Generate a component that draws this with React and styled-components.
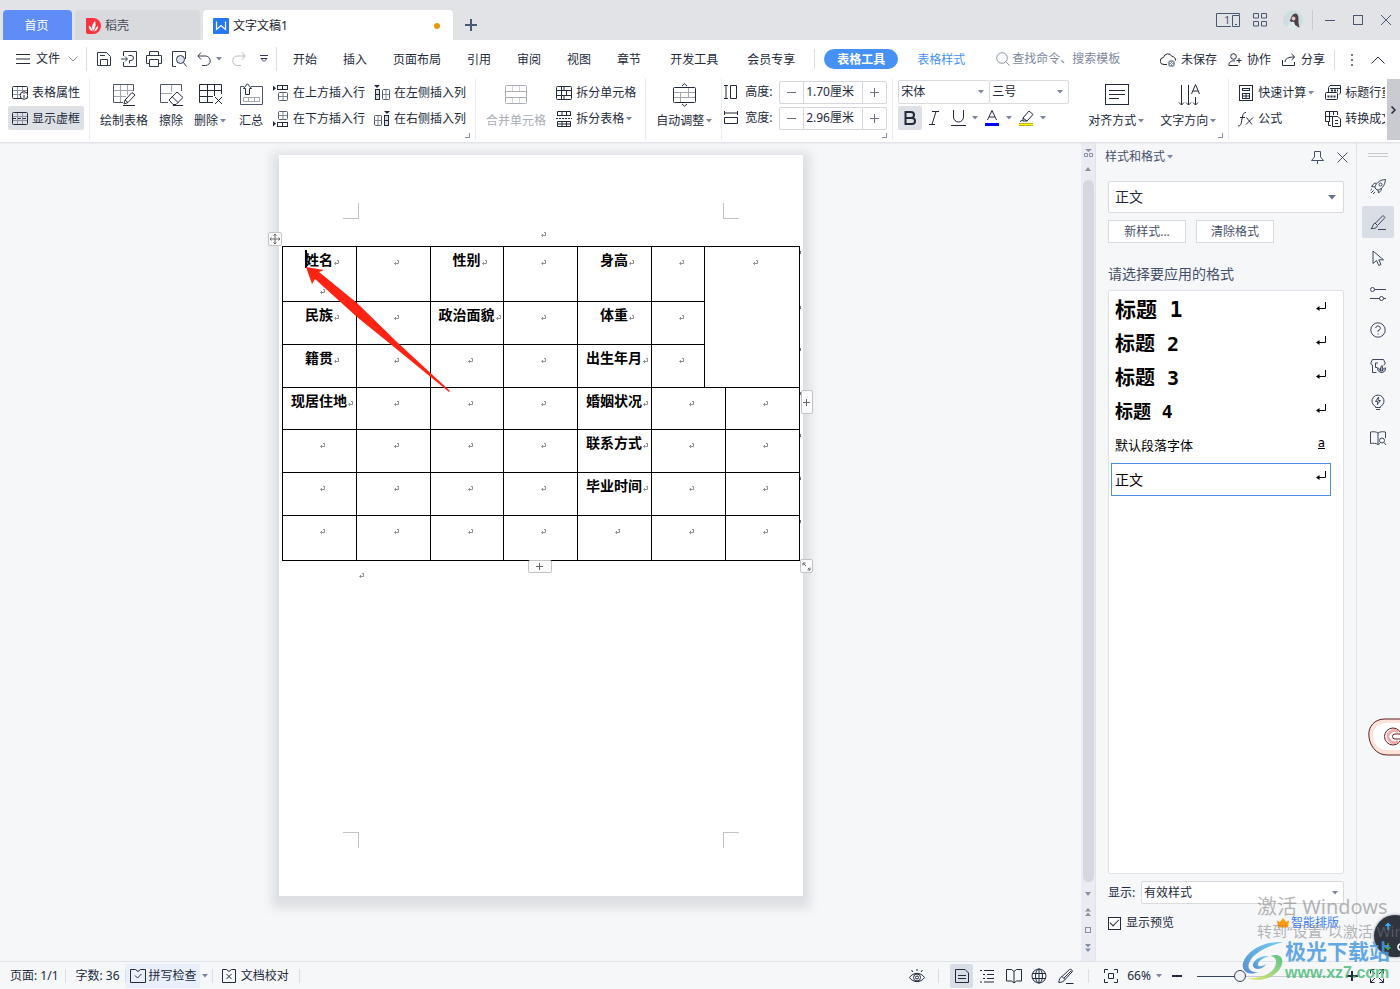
import React, { useState } from 'react';
import styled, { createGlobalStyle } from 'styled-components';

const GlobalStyle = createGlobalStyle`
  * {
    box-sizing: border-box;
  }
  body {
    margin: 0;
    overflow: hidden;
  }
  body, button, input, select {
    font-family: "Noto Sans", "Noto Sans CJK SC", sans-serif;
    font-size: 12px;
    line-height: 18px;
    color: #232a3b;
  }
  button {
    display: flex;
    align-items: center;
    justify-content: center;
    padding: 0;
    border: none;
    background: none;
    white-space: nowrap;
    cursor: pointer;
  }
  label {
    white-space: nowrap;
  }
  input, select {
    padding: 0;
    border: none;
    outline: none;
    background: none;
    appearance: none;
  }
  svg {
    display: block;
    flex: none;
  }
`

const Shell = styled.div`
  position: relative;
  display: flex;
  flex-direction: column;
  height: 100vh;
  overflow: hidden;
  background: #f5f7f9;
`

/* ---------- title bar ---------- */

const TitleBar = styled.header`
  display: flex;
  align-items: flex-end;
  gap: 3px;
  height: 40px;
  flex: none;
  padding-left: 3px;
  background: #e2e3e7;
`

const DocTab = styled.button`
  height: 30px;
  width: ${p => p.$width}px;
  gap: 4px;
  padding: 2px 12px 0 10px;
  justify-content: ${p => p.$center ? "center" : "flex-start"};
  border-radius: 4px 4px 0 0;
  background: ${p => p.$bg};
  color: ${p => p.$color || "#20242e"};
`

const UnsavedDot = styled.span`
  width: 6px;
  height: 6px;
  margin: 0 1px 0 auto;
  border-radius: 50%;
  background: #e39a0b;
`

const NewTab = styled.button`
  width: 30px;
  height: 30px;
  color: #4a5872;
`

const WindowControls = styled.div`
  display: flex;
  align-items: center;
  height: 40px;
  margin-left: auto;
  color: #4a5872;
`

const WinButton = styled.button`
  width: ${p => p.$width || 28}px;
  height: 28px;
  color: inherit;
`

const Avatar = styled.button`
  width: 20px;
  height: 20px;
  margin: 0 9px 0 7px;
  border-radius: 50%;
  overflow: hidden;
  background: #cfdde0;
`

const Divider = styled.span`
  flex: none;
  width: 1px;
  height: ${p => p.$height || 24}px;
  margin: 0 ${p => p.$right || 0}px 0 ${p => p.$left || 0}px;
  background: ${p => p.$color || "#dcdee3"};
`

/* ---------- menu ---------- */

const MenuBar = styled.nav`
  display: flex;
  align-items: center;
  flex: none;
  height: 38px;
  padding: 0 15px 0 16px;
  background: #fff;
`

const FileButton = styled.button`
  gap: 6px;
  svg:last-child {
    margin-left: 2px;
  }
`

const QuickButton = styled.button`
  width: 25px;
  height: 24px;
  margin-left: ${p => p.$left || 0}px;
  color: ${p => p.$muted ? "#b5b9c1" : "#313a4d"};
`

const MenuTab = styled.button`
  height: 24px;
  padding: 2px 13px 0 ${p => p.$wide ? 16 : 13}px;
  color: ${p => p.$blue ? "#4691f6" : "#232a3b"};
`

const ActiveTab = styled.button`
  height: 20px;
  margin-left: 9px;
  margin-right: 6px;
  padding: 1px 13px 0;
  border-radius: 10px;
  background: #4691f6;
  color: #fff;
  font-weight: bold;
`

const Search = styled.label`
  display: flex;
  align-items: center;
  gap: 2px;
  margin-left: 18px;
  color: #8e99ae;
  input {
    width: 120px;
  }
  input::placeholder {
    color: #7d889e;
    opacity: 1;
  }
`

const MenuRight = styled.div`
  display: flex;
  align-items: center;
  gap: 11px;
  margin-left: auto;
  padding-top: 1px;
  button {
    gap: 5px;
  }
`

/* ---------- ribbon ---------- */

const Ribbon = styled.section`
  position: relative;
  z-index: 1;
  display: flex;
  flex: none;
  height: 64px;
  background: #fff;
  box-shadow: 0 1px 2px #d9dbdf;
`

const Group = styled.div`
  position: relative;
  display: flex;
  align-items: flex-start;
  gap: 1px;
  flex: ${p => p.$grow ? "1 1 0" : "none"};
  min-width: 0;
  height: 62px;
  padding: 2px ${p => p.$right === undefined ? 5 : p.$right}px 0 ${p => p.$left || 5}px;
  overflow: ${p => p.$grow ? "hidden" : "visible"};
  border-right: ${p => p.$grow ? "none" : "1px solid #ebecef"};
`

const Column = styled.div`
  display: flex;
  flex-direction: column;
  flex: none;
  gap: 2px;
`

const RowButton = styled.button`
  justify-content: flex-start;
  gap: 4px;
  height: 24px;
  padding: 1px 4px 0;
  border-radius: 2px;
  background: ${p => p.$on ? "#dde1e6" : "none"};
`

const BigButton = styled.button`
  flex: none;
  flex-direction: column;
  gap: 5px;
  height: 51px;
  padding: 2px 5px 0;
  color: ${p => p.disabled ? "#a9adb6" : "#232a3b"};
`

const Label = styled.span`
  display: flex;
  align-items: center;
`

const Corner = styled.span`
  position: absolute;
  right: 5px;
  bottom: 2px;
  width: 5px;
  height: 5px;
  border: solid #8c93a3;
  border-width: 0 1px 1px 0;
`

const SizeRow = styled.div`
  display: flex;
  align-items: center;
  gap: 7px;
  height: 24px;
  label {
    width: 27px;
  }
`

const Spinner = styled.div`
  display: flex;
  width: 108px;
  height: 23px;
  border: 1px solid #d5d7dc;
  border-radius: 2px;
  button {
    width: 23px;
    color: #6d7380;
  }
  input {
    flex: 1;
    width: 0;
    padding-left: 2px;
    border: solid #d5d7dc;
    border-width: 0 1px;
  }
`

const SelectBox = styled.div`
  display: flex;
  align-items: center;
  flex: ${p => p.$grow ? 1 : "none"};
  width: ${p => p.$width ? p.$width + "px" : "auto"};
  height: ${p => p.$height || 24}px;
  padding: 0 ${p => p.$large ? 7 : 3}px 0 ${p => p.$large ? 6 : 2}px;
  margin-right: ${p => p.$join ? -1 : 0}px;
  border: 1px solid #d8dae0;
  border-radius: 2px;
  background: #fff;
  select {
    flex: 1;
    min-width: 0;
    font-size: ${p => p.$large ? 14 : 12}px;
    line-height: 20px;
  }
`

const FontTools = styled.div`
  display: flex;
  align-items: center;
  height: 24px;
`

const FontButton = styled.button`
  width: 24px;
  height: 24px;
  border-radius: 2px;
  background: ${p => p.$on ? "#dde1e6" : "none"};
`

const RibbonScroll = styled.button`
  width: 13px;
  height: 61px;
  margin: 1px 0 0 2px;
  background: #c9cbd1;
`

/* ---------- workspace ---------- */

const Workspace = styled.main`
  display: flex;
  flex: 1;
  min-height: 0;
`

const Canvas = styled.div`
  display: flex;
  justify-content: center;
  align-items: flex-start;
  flex: 1;
  min-width: 0;
  padding-top: 13px;
`

const Page = styled.article`
  position: relative;
  display: flex;
  flex-direction: column;
  width: 524px;
  height: calc(100% - 65px);
  padding: 48px 3px;
  background: #fff;
  box-shadow: 0 5px 10px 7px #dcdee1;
`

const CropRow = styled.div`
  display: flex;
  justify-content: space-between;
  padding: 0 61px;
  margin-top: ${p => p.$end ? "auto" : 0};
`

const Crop = styled.span`
  width: 16px;
  height: 16px;
  border: solid #c3c3c3;
  border-width: ${p => p.$sides};
`

const Paragraph = styled.div`
  display: flex;
  justify-content: ${p => p.$start ? "flex-start" : "center"};
  height: 27px;
  padding: ${p => p.$start ? "12px 0 0 76px" : "13px 2px 0 0"};
`

const Form = styled.table`
  width: 518px;
  table-layout: fixed;
  border-collapse: collapse;
  color: #000;
  td {
    padding: 3px 0 0;
    border: 1px solid #000;
    vertical-align: top;
    text-align: center;
    font-size: 14px;
    font-weight: bold;
    line-height: 19px;
    white-space: nowrap;
  }
`

const ReturnMark = styled.svg`
  display: inline-block;
  margin: 0 -6px 0 1px;
  stroke: #858585;
  fill: none;
`

const SecondLine = styled.div`
  margin-top: 10px;
`

const Handle = styled.button`
  position: absolute;
  left: ${p => p.$x}px;
  top: ${p => p.$y}px;
  width: ${p => p.$w}px;
  height: ${p => p.$h}px;
  border: 1px solid #c2c4c8;
  border-radius: 2px;
  background: #fbfbfb;
  color: #666;
`

const Overlay = styled.svg`
  position: absolute;
  left: 0;
  top: 0;
  pointer-events: none;
`

const ScrollBar = styled.div`
  display: flex;
  flex-direction: column;
  align-items: center;
  width: 15px;
  flex: none;
  padding: 4px 0 6px;
  border-right: 1px solid #e1e3e9;
  background: #ebecf1;
  color: #8790a8;
`

const ScrollButton = styled.button`
  width: 14px;
  height: ${p => p.$h}px;
  color: inherit;
`

const Thumb = styled.div`
  width: 11px;
  flex: 1;
  border-radius: 6px;
  background: #d5d8e0;
`

/* ---------- styles panel ---------- */

const Panel = styled.aside`
  display: flex;
  flex-direction: column;
  flex: none;
  width: 261px;
  padding: 0 12px 29px;
  border-right: 1px solid #e1e3e9;
`

const PanelHead = styled.div`
  display: flex;
  align-items: center;
  height: 30px;
  margin: 0 -4px 9px -3px;
  color: #475069;
  button {
    color: inherit;
  }
  > button:nth-child(2) {
    margin-left: auto;
    margin-right: 13px;
  }
`

const ButtonRow = styled.div`
  display: flex;
  gap: 10px;
  margin: 7px 0 20px;
  button {
    width: 78px;
    height: 23px;
    border: 1px solid #d8dae0;
    background: #fff;
    color: #475069;
  }
`

const Prompt = styled.div`
  margin-bottom: 5px;
  font-size: 14px;
  line-height: 22px;
  color: #475069;
`

const StyleList = styled.div`
  flex: 1;
  padding: 2px 12px 0 2px;
  border: 1px solid #dfe1e6;
  border-radius: 2px;
  background: #fff;
`

const StyleItem = styled.button`
  justify-content: space-between;
  width: 100%;
  height: ${p => p.$on ? 33 : 34}px;
  padding: 0 ${p => p.$on ? 4 : 5}px 0 ${p => p.$on ? 3 : 4}px;
  border: ${p => p.$on ? "1px solid #4a8fe2" : "none"};
  color: #000;
  font-family: "DejaVu Sans Mono", "Noto Sans CJK SC", monospace;
  font-size: ${p => p.$size}px;
  font-weight: ${p => p.$bold ? "bold" : "normal"};
  line-height: 24px;
  svg {
    margin-bottom: 8px;
  }
`

const CharMark = styled.span`
  margin: 0 1px 6px 0;
  border-bottom: 1px solid #000;
  font-size: 12px;
  line-height: 10px;
`

const ShowRow = styled.div`
  display: flex;
  align-items: center;
  gap: 6px;
  margin: 7px 0 10px;
  label {
    width: 27px;
  }
`

const PreviewRow = styled.div`
  display: flex;
  align-items: center;
  justify-content: space-between;
  height: 18px;
  padding-right: 5px;
  label {
    display: flex;
    align-items: center;
    gap: 5px;
  }
  a {
    display: flex;
    align-items: center;
    gap: 2px;
    color: #3c7ef7;
    text-decoration: none;
  }
`

const CheckBox = styled.input`
  width: 13px;
  height: 13px;
  border: 1px solid #232a3b;
  background: #fff;
  display: grid;
  place-items: center;
  margin: 0;
  &:checked::after {
    content: "";
    width: 8px;
    height: 4px;
    margin-bottom: 3px;
    border: solid #232a3b;
    border-width: 0 0 1px 1px;
    transform: rotate(-45deg);
  }
`

const SideBar = styled.aside`
  display: flex;
  flex-direction: column;
  align-items: center;
  gap: 4px;
  flex: none;
  width: 43px;
  padding-right: 1px;
  color: #3d465c;
`

const SideGrip = styled.span`
  width: 20px;
  height: 4px;
  margin: 11px 0 9px;
  border: solid #c5c9d0;
  border-width: 1px 0;
`

const SideButton = styled.button`
  width: 32px;
  height: 32px;
  border-radius: 2px;
  background: ${p => p.$on ? "#d9dde5" : "none"};
  color: inherit;
`

/* ---------- status bar ---------- */

const StatusBar = styled.footer`
  display: flex;
  align-items: center;
  flex: none;
  height: 28px;
  padding: 0 4px 0 10px;
  border-top: 1px solid #dfe2e8;
`

const SpellCheck = styled.button`
  gap: 3px;
  height: 24px;
  padding: 0 3px 0 4px;
  background: #e9f0fb;
`

const ProofButton = styled.button`
  gap: 5px;
  margin: 0 10px 0 9px;
`

const ViewButton = styled.button`
  width: ${p => p.$width || 26}px;
  height: 24px;
  border-radius: 2px;
  background: ${p => p.$on ? "#d9dde5" : "none"};
`

const ViewTools = styled.div`
  display: flex;
  align-items: center;
  margin-left: auto;
`

const Zoom = styled.input`
  width: 143px;
  height: 14px;
  margin: 0 6px 0 7px;
  &::-webkit-slider-runnable-track {
    height: 12px;
    background: linear-gradient(#3a4459, #3a4459) 0 6px / 42px 1px no-repeat,
      linear-gradient(#c6cad3, #c6cad3) 0 6px / 100% 1px no-repeat;
  }
  &::-webkit-slider-thumb {
    appearance: none;
    width: 12px;
    height: 12px;
    border: 1px solid #3a4459;
    border-radius: 50%;
    background: #f0f1f3;
  }
`

/* ---------- floating things ---------- */

const Activate = styled.div`
  position: absolute;
  left: calc(100% - 143px);
  bottom: 47px;
  color: rgba(120, 120, 120, 0.55);
  font-size: 15px;
  line-height: 22px;
  white-space: nowrap;
  pointer-events: none;
  strong {
    display: block;
    font-size: 20px;
    font-weight: normal;
    line-height: 26px;
  }
`

const Brand = styled.div`
  position: absolute;
  right: 10px;
  bottom: 6px;
  display: flex;
  align-items: center;
  color: #4a9be0;
  font-size: 21px;
  font-weight: bold;
  line-height: 24px;
  opacity: 0.85;
  white-space: nowrap;
  pointer-events: none;
  small {
    display: block;
    color: #53bd7d;
    font-family: "Liberation Sans", sans-serif;
    font-size: 16px;
    line-height: 20px;
  }
`

const NetBall = styled.div`
  position: absolute;
  right: -16px;
  bottom: 32px;
  width: 42px;
  height: 42px;
  border-radius: 50%;
  background: #2f343f;
  box-shadow: 0 0 3px #777c86;
`

const Bubble = styled.svg`
  position: absolute;
  right: 0;
  bottom: 233px;
`

/* ---------- icons ---------- */

const Icon = ({ w = 16, h = 16, children, ...rest }) => (
  <svg width={w} height={h} viewBox={`0 0 ${w} ${h}`} fill="none" stroke="currentColor" {...rest}>
    {children}
  </svg>
)

const CaretSvg = styled.svg`
  margin: 0 2px;
  fill: #7c879f;
  pointer-events: none;
`

const Caret = () => (
  <CaretSvg width="6" height="4" viewBox="0 0 6 4"><path d="M0 0H6L3 3.5Z" /></CaretSvg>
)

const Mark = () => (
  <ReturnMark width="5" height="5" viewBox="0 0 5 5">
    <path d="M3 .5H4.5V3.5H1M2 2L.5 3.5L2 4.8" strokeWidth=".9" />
  </ReturnMark>
)

const StyleMark = () => (
  <Icon w={10} h={9}><path d="M9.500 0V6.500H1.500" /><path d="M0 6.500L3.500 4V9Z" fill="#000" stroke="none" /></Icon>
)

const GridIcon = ({ children, light = true, dashed }) => (
  <Icon h={14}>
    <rect x=".5" y=".5" width="15" height="12" rx="1" />
    <path d="M1 4.500H15M1 8.500H15M5.500 1V12M10.500 1V12" stroke={light ? "#8d94a3" : "currentColor"} />
    {dashed && <path d="M1 6.500H15" stroke="currentColor" strokeDasharray="3 2" />}
    {children}
  </Icon>
)

const InsertRow = ({ down }) => (
  <Icon transform={down ? "scale(1 -1)" : undefined}>
    <path d="M0 .5V6L3 3.200Z" fill="currentColor" stroke="none" />
    <rect x="4.500" y=".5" width="10" height="4" />
    <path d="M9.500 .5V4.500" />
    <rect x="5.500" y="7.500" width="9" height="8" rx="1" stroke="#555e71" />
    <path d="M5.500 11.500H14.500M10 7.500V15.500" stroke="#7d8596" />
  </Icon>
)

const InsertCol = ({ right }) => (
  <Icon transform={right ? "scale(-1 1)" : undefined}>
    <path d="M0 0H6L3 3Z" fill="currentColor" stroke="none" />
    <rect x="1.500" y="4.500" width="4" height="10" fill="#d9dce2" />
    <path d="M1.500 9.500H5.500" />
    <rect x="8.500" y="4.500" width="7" height="10" rx="1" stroke="#555e71" />
    <path d="M8.500 9.500H15.500M12 4.500V14.500" stroke="#7d8596" />
  </Icon>
)

const DrawTable = () => (
  <Icon w={24} h={24}>
    <path d="M11 19.500H1.500V1.500H21.500V8" stroke="#4d566a" />
    <path d="M2 7.500H21M2 13.500H14M8.500 2V19M15.500 2V12" stroke="#a2a7b3" />
    <path d="M12 21L13 17L20 9.500L23 12L16 19.500ZM13 17L16 19.500M11 22.500H23" />
  </Icon>
)

const EraseIcon = () => (
  <Icon w={24} h={24}>
    <path d="M9 19.500H1.500V1.500H22.500V8" stroke="#4d566a" />
    <path d="M2 10.500H13M12.500 2V9" stroke="#a2a7b3" />
    <path d="M10 17L18 9L24 14.500L17 21.500H14ZM13 13.500L19 19.500M14 22.500H24" />
  </Icon>
)

const DeleteIcon = () => (
  <Icon w={24} h={24}>
    <path d="M.5 1.500H22.500V11M.5 1.500V19.500H14M.5 7.500H22.500M.5 13.500H14M8.500 1.500V19.500M15.500 1.500V13" />
    <path d="M16 14L23 21M23 14L16 21" />
  </Icon>
)

const SummaryIcon = () => (
  <Icon w={24} h={24}>
    <path d="M5 3.500H1.500V21.500H23.500V3.500H12" stroke="#4d566a" />
    <path d="M4.500 5.500L8.500 .8L12.500 5.500H10.500V11.500H6.500V5.500Z" fill="#fff" />
    <path d="M4.500 14.500H20.500V18.500H4.500ZM9.500 14.500V18.500M15.500 14.500V18.500" stroke="#a2a7b3" />
  </Icon>
)

const MergeIcon = () => (
  <Icon w={24} h={24}>
    <rect x="1.500" y="2.500" width="21" height="18" rx="1" />
    <path d="M1.500 8.500H22.500M1.500 14.500H22.500" />
    <path d="M8.500 3V8M15.500 3V8M8.500 15V20M15.500 15V20" stroke="#d3d5da" />
  </Icon>
)

const SplitCell = () => (
  <Icon h={14}>
    <rect x=".5" y=".5" width="15" height="13" rx="1" />
    <path d="M0 4.500H16M0 9.500H16M5.500 0V14M10.500 4V10M8 0V4M8 10V14" />
  </Icon>
)

const SplitTable = () => (
  <Icon>
    <path d="M1.500 5V.5H14.500V5M6 .5V5M10.500 .5V5M1.500 4.500H14.500" />
    <path d="M0 7.500H16" strokeDasharray="2 1" />
    <path d="M1.500 10.500H14.500V15.500H1.500ZM6 10V15M10.500 10V15M1.500 13H14.500" />
  </Icon>
)

const AutoFit = () => (
  <Icon w={24} h={24}>
    <rect x=".5" y="4.500" width="22" height="15" rx="1" />
    <path d="M1 9.500H22M1 14.500H22M7.500 9.500V19M15.500 5V14" stroke="#a2a7b3" />
    <path d="M9 3L11.500 .8L14 3M9 21L11.500 23.200L14 21" />
  </Icon>
)

const AlignIcon = () => (
  <Icon w={24} h={24}>
    <rect x=".5" y="1.500" width="23" height="20" />
    <path d="M4 7.500H20M4 11.500H20M4 15.500H14" />
  </Icon>
)

const DirectionIcon = () => (
  <Icon w={24} h={24}>
    <path d="M4.500 2V22M2 19.500L4.500 22L7 19.500M11.500 2V22M9 19.500L11.500 22L14 19.500" />
    <path d="M14.500 11L18.500 1.500L22.500 11M15.800 8H21.200M18.500 14V22M16 19.500L18.500 22L21 19.500" />
  </Icon>
)

const CalcIcon = () => (
  <Icon>
    <rect x="1.500" y=".5" width="13" height="15" />
    <rect x="4.500" y="3.500" width="7" height="2" />
    <path d="M4 8.500H12M4 11H12M4 13.500H12M4.500 8V14M8 8V14M11.500 8V14" />
  </Icon>
)

const RepeatIcon = () => (
  <Icon>
    <path d="M3.500 7V2.500L5 .5H15.500V8L14 9.500M5 3.500H15" />
    <path d="M6 5.500H13" strokeWidth="2" strokeDasharray="2 1" />
    <rect x=".5" y="7.500" width="12" height="7" rx="1" />
    <path d="M2.500 11.500H11" strokeWidth="2" strokeDasharray="2 1" />
  </Icon>
)

const ConvertIcon = () => (
  <Icon>
    <path d="M5 10.500H.5V.5H12.500V4M.5 5.500H8M4.500 .5V10M8.500 .5V4" />
    <path d="M7.500 5.500H13L15.500 8V15.500H7.500ZM10 9.500H13M10 12.500H13M3.500 10V14.500H6" />
  </Icon>
)

const WpsLogo = () => (
  <svg width="16" height="16" viewBox="0 0 16 16">
    <rect width="16" height="16" rx="1" fill="#2878f0" />
    <path d="M3.500 3.500V11.500L8 7.500L12.500 11.500V3.500" fill="none" stroke="#fff" strokeWidth="1.200" />
  </svg>
)

const DocerLogo = () => (
  <svg width="16" height="16" viewBox="0 0 16 16">
    <path d="M1 0H8A8 8 0 0 1 8 16H3A2 2 0 0 1 1 14Z" fill="#f8323e" />
    <path d="M8 13C6 9 8 5 10 3C11 6 11 9 8 13ZM7.500 13.500C4 12 3.500 9 4 7.500C6 8.500 7 10 7.500 13.500ZM9 13.500C12 13 13.500 10 13 8C11 9 10 11 9 13.500Z" fill="#fff" />
  </svg>
)

const menus = ["开始", "插入", "页面布局", "引用", "审阅", "视图", "章节", "开发工具", "会员专享"]

const sideIcons = [
  <><path d="M5 10C5 6 9 2 15.500 1.500C15 8 11 12 7 12ZM5 9L1.500 8.500L4 5.500L6.500 5M8 12L8.500 15L11 12.500L11.500 10M1 15L3.500 12.500M3 16L5 14M.5 12L2 10.800" /><circle cx="10.500" cy="6.500" r="1.500" /></>,
  <><path d="M5.500 9L13 1.500L15 3.500L8 11M1 14.500C3 13.500 2.500 10 5 9L7.500 11.500C7 14 4 15 1 14.500ZM8 15.500H16" /></>,
  <><path d="M3 1V13.500L6.500 10.500L8.800 15.500L11 14.500L8.800 9.800H13.500Z" /></>,
  <><circle cx="2.500" cy="3.500" r="2" /><path d="M4.500 3.500H16M0 12.500H9.500M13.500 12.500H16" /><circle cx="11.500" cy="12.500" r="2" /></>,
  <><circle cx="8" cy="8" r="7.200" /><path d="M5.700 6A2.300 2.300 0 1 1 8 8.500V10M8 11.500V12.500" /></>,
  <><path d="M6.500 14.500H2.500V7A2 2 0 0 1 .8 5L2.500 1.500H13.500L15.200 5A2 2 0 0 1 13.500 7M5.500 5V9.500H7.500M5.500 5H8" /><path d="M11 14.500C7 13 7.500 11 7.500 10C9.500 10.500 10 11.500 10.500 13C10 10 11 8.500 12 7.500C13 9.500 12.500 11 12 13C12.500 11 14 10 15.500 10C16 12.500 14 14.500 11 14.500Z" fill="currentColor" fillOpacity=".35" /></>,
  <><path d="M5.500 13.500V12.500A6 6 0 1 1 10.500 12.500V13.500ZM6 15.500H10" /><path d="M8.500 3L5.500 7.500H7.800L7.300 10.500L10.500 6.500H8.200Z" /></>,
  <><path d="M8 3V14.500C6 13 3 13 .5 13.500V2C3 1.500 6 1.500 8 3C10 1.500 13 1.500 15.500 2V8M8 14.500L10 13.500" /><circle cx="12" cy="10.500" r="2.500" /><path d="M14 12.500L16 15" /></>
]

const widths = [74, 74, 73, 74, 74, 53, 21, 74]

// rows below the first one; "" is an empty cell
const rows = [
  { h: 43, cells: ["民族", "", "政治面貌", "", "体重", ""] },
  { h: 43, cells: ["籍贯", "", "", "", "出生年月", ""] },
  { h: 42, cells: ["现居住地", "", "", "", "婚姻状况", "", ""], full: true },
  { h: 43, cells: ["", "", "", "", "联系方式", "", ""], full: true },
  { h: 43, cells: ["", "", "", "", "毕业时间", "", ""], full: true },
  { h: 45, cells: ["", "", "", "", "", "", ""], full: true }
]

const styleNames = [
  { name: "标题 1", size: 21, bold: true },
  { name: "标题 2", size: 20, bold: true },
  { name: "标题 3", size: 20, bold: true },
  { name: "标题 4", size: 18, bold: true },
  { name: "默认段落字体", size: 13, char: true },
  { name: "正文", size: 14 }
]

function Titles() {
  return (
    <TitleBar>
      <DocTab $width={69} $center $bg="#5f8df8" $color="#fff">首页</DocTab>
      <DocTab $width={125} $bg="#d9dadd" $color="#454b57"><DocerLogo />稻壳</DocTab>
      <DocTab $width={250} $bg="#fff"><WpsLogo />文字文稿1<UnsavedDot /></DocTab>
      <NewTab aria-label="新建">
        <Icon w={12} h={12} strokeWidth="2"><path d="M6 0V12M0 6H12" /></Icon>
      </NewTab>
      <WindowControls>
        <WinButton $width={32} aria-label="窗口">
          <svg width="24" height="14" viewBox="0 0 24 14" fill="none" stroke="currentColor">
            <path d="M15 .5H.5V13.500H15M16.500 2.500H23.500V13.500H16.500ZM15 .5H23.500V2M19 11.500H21" />
            <text x="8" y="11" fontSize="11" fill="currentColor" stroke="none">1</text>
          </svg>
        </WinButton>
        <WinButton $width={32} aria-label="应用">
          <Icon w={14} h={14}><path d="M.5 .5H5.500V5H.5ZM8.500 .5H13.500V5H8.500ZM.5 8.500H5.500V13H.5ZM8.500 8.500H13.500V13H8.500Z" /></Icon>
        </WinButton>
        <Avatar aria-label="账号">
          <svg width="20" height="20" viewBox="0 0 20 20">
            <path d="M7 11C8 6 11 2 14 4C17 7 14 12 17 18L12 15Z" fill="#4a4048" />
            <circle cx="10.500" cy="8.500" r="2" fill="#e5c3bd" />
            <path d="M3 20C5 13 8 11 11 12L14 20Z" fill="#dbe9ea" />
          </svg>
        </Avatar>
        <Divider $height={20} $color="#c9cbd1" $right={3} />
        <WinButton aria-label="最小化"><Icon w={10} h={10}><path d="M0 5.500H10" /></Icon></WinButton>
        <WinButton aria-label="最大化"><Icon w={10} h={10}><rect x=".5" y=".5" width="9" height="9" /></Icon></WinButton>
        <WinButton aria-label="关闭"><Icon w={10} h={10}><path d="M0 0L10 10M10 0L0 10" /></Icon></WinButton>
      </WindowControls>
    </TitleBar>
  )
}

function Menu() {
  return (
    <MenuBar>
      <FileButton>
        <Icon w={14} h={10}><path d="M0 .5H14M0 5H14M0 9.500H14" /></Icon>
        文件
        <Icon w={10} h={6} color="#8b94a6"><path d="M.5 .5L5 5L9.500 .5" /></Icon>
      </FileButton>
      <Divider $left={8} $right={4} />
      <QuickButton aria-label="保存">
        <Icon><path d="M1.500 1.500H10.500L14.500 5.500V14.500H1.500ZM4.500 14V8.500H11.500V14M4 4.500H9" /></Icon>
      </QuickButton>
      <QuickButton aria-label="输出为PDF">
        <Icon><path d="M2.500 5V.5H15.500V15.500H2.500V11M0 8H6M4 5.500L6.500 8L4 10.500M7.500 4.500H10A2.500 2.500 0 0 1 10 9.500H8.500V12.500" /></Icon>
      </QuickButton>
      <QuickButton aria-label="打印">
        <Icon><path d="M3.500 4.500V.5H12.500V4.500M3 12.500H.5V4.500H15.500V12.500H13M3.500 8.500H12.500V15.500H3.500Z" /></Icon>
      </QuickButton>
      <QuickButton aria-label="打印预览">
        <Icon><path d="M5 15.500H1.500V.5H14.500V8" /><circle cx="9.500" cy="8.500" r="4" fill="#dfe2e7" /><path d="M12.500 11.500L15.500 15.500" /></Icon>
      </QuickButton>
      <QuickButton aria-label="撤销">
        <Icon w={14} h={14}><path d="M4 .5L.8 4L4 7.500M1 4H8.500A4.500 4.500 0 0 1 8.500 13.500H5" /></Icon>
      </QuickButton>
      <Icon w={6} h={4}><path d="M0 0H6L3 3.500Z" fill="#7c879f" stroke="none" /></Icon>
      <QuickButton $left={4} $muted aria-label="恢复">
        <Icon w={14} h={14}><path d="M10 .5L13.200 4L10 7.500M13 4H5.500A4.500 4.500 0 0 0 5.500 13.500H9" /></Icon>
      </QuickButton>
      <QuickButton aria-label="自定义">
        <Icon w={8} h={8}><path d="M0 .5H8M1 3.500L4 6.500L7 3.500Z" /></Icon>
      </QuickButton>
      <Divider $right={3} />
      {menus.map((name, i) => <MenuTab key={name} $wide={i > 6}>{name}</MenuTab>)}
      <Divider $left={6} $height={20} />
      <ActiveTab>表格工具</ActiveTab>
      <MenuTab $blue>表格样式</MenuTab>
      <Search>
        <Icon w={14} h={14}><circle cx="6" cy="6" r="5.300" /><path d="M10 10L13.500 13.500" /></Icon>
        <input aria-label="搜索" placeholder="查找命令、搜索模板" />
      </Search>
      <MenuRight>
        <button>
          <Icon>
            <path d="M7 12.500H4A3.500 3.500 0 0 1 3.500 5.500A4.500 4.500 0 0 1 12 4.500A3.500 3.500 0 0 1 15.500 8.500" />
            <circle cx="11.500" cy="11.500" r="3.500" fill="#8c95a7" stroke="none" />
            <path d="M10 10L13 13M13 10L10 13" stroke="#fff" />
          </Icon>
          未保存
        </button>
        <button>
          <Icon w={14} h={14}><circle cx="5.500" cy="3.500" r="2.800" /><path d="M9 12.500H.8C.8 9 3 7.500 7 8M11 5V10M8.500 7.500H13.500M7 12.500L10 12.500" /></Icon>
          协作
        </button>
        <button>
          <Icon w={14} h={14}><path d="M.5 7V12.500H12.500V9M3 9C3.500 5.500 6 4 12 4M9.500 1L12.800 4L9.500 7" /></Icon>
          分享
        </button>
        <Divider $height={20} $left={-2} />
        <button aria-label="更多">
          <Icon w={14} h={12}><path d="M6 0V2M6 5V7M6 10V12" strokeWidth="2" stroke="#6b7385" /></Icon>
        </button>
        <button aria-label="折叠功能区">
          <Icon w={14} h={8}><path d="M.5 7.500L7 1L13.500 7.500" /></Icon>
        </button>
      </MenuRight>
    </MenuBar>
  )
}

function SizeField({ id, label, value, icon }) {
  const [text, setText] = useState(value)
  return (
    <SizeRow>
      {icon}
      <label htmlFor={id}>{label}</label>
      <Spinner>
        <button aria-label="减少"><Icon w={9} h={9}><path d="M0 4.500H9" /></Icon></button>
        <input id={id} value={text} onChange={e => setText(e.target.value)} />
        <button aria-label="增加"><Icon w={9} h={9}><path d="M0 4.500H9M4.500 0V9" /></Icon></button>
      </Spinner>
    </SizeRow>
  )
}

function Tools() {
  return (
    <Ribbon>
      <Group $left={8}>
        <Column>
          <RowButton>
            <GridIcon><circle cx="12" cy="9.500" r="3.800" fill="#fff" /><path d="M12 7V8M12 9V12" /></GridIcon>
            表格属性
          </RowButton>
          <RowButton $on><GridIcon dashed />显示虚框</RowButton>
        </Column>
      </Group>
      <Group>
        <BigButton><DrawTable />绘制表格</BigButton>
        <BigButton><EraseIcon />擦除</BigButton>
        <BigButton><DeleteIcon /><Label>删除<Caret /></Label></BigButton>
        <BigButton><SummaryIcon />汇总</BigButton>
        <Column>
          <RowButton><InsertRow />在上方插入行</RowButton>
          <RowButton><InsertRow down />在下方插入行</RowButton>
        </Column>
        <Column>
          <RowButton><InsertCol />在左侧插入列</RowButton>
          <RowButton><InsertCol right />在右侧插入列</RowButton>
        </Column>
        <Corner />
      </Group>
      <Group>
        <BigButton disabled><MergeIcon />合并单元格</BigButton>
        <Column>
          <RowButton><SplitCell />拆分单元格</RowButton>
          <RowButton><SplitTable /><Label>拆分表格<Caret /></Label></RowButton>
        </Column>
      </Group>
      <Group $right={2}>
        <BigButton><AutoFit /><Label>自动调整<Caret /></Label></BigButton>
      </Group>
      <Group $left={2}>
        <Column>
          <SizeField id="row-height" label="高度:" value="1.70厘米" icon={
            <Icon w={14} h={14}><path d="M0 .5H4M0 13.500H4M2 .5V13.500M6.500 .5H12.500V13.500H6.500Z" /></Icon>
          } />
          <SizeField id="col-width" label="宽度:" value="2.96厘米" icon={
            <Icon w={14} h={14}><path d="M.5 0V4M13.500 0V4M.5 2H13.500M.5 6.500H13.500V12.500H.5Z" /></Icon>
          } />
        </Column>
        <Corner />
      </Group>
      <Group>
        <Column>
          <FontTools>
            <SelectBox $width={92} $join>
              <select aria-label="字体"><option>宋体</option></select><Caret />
            </SelectBox>
            <SelectBox $width={80}>
              <select aria-label="字号"><option>三号</option></select><Caret />
            </SelectBox>
          </FontTools>
          <FontTools>
            <FontButton $on aria-label="加粗">
              <Icon w={12} h={14} strokeWidth="2"><path d="M1.500 1H7A3 3 0 0 1 7 7H1.500ZM1.500 7H8A3 3 0 0 1 8 13H1.500Z" /></Icon>
            </FontButton>
            <FontButton aria-label="倾斜">
              <Icon w={10} h={14}><path d="M3 .5H10M0 13.500H6M7 .5L3 13.500" /></Icon>
            </FontButton>
            <FontButton aria-label="下划线">
              <Icon w={16} h={16}><path d="M3.500 0V7A4.500 4.500 0 0 0 13.500 7V0M1 15.500H16" /></Icon>
            </FontButton>
            <Caret />
            <FontButton aria-label="字体颜色">
              <Icon w={14} h={16}><path d="M2.500 10L7 .5L11.500 10M4 7H10" /><path d="M0 14.500H14" stroke="#0000ff" strokeWidth="3" /></Icon>
            </FontButton>
            <Caret />
            <FontButton aria-label="突出显示">
              <Icon>
                <path d="M1 14.500H15" stroke="#7b7a20" strokeWidth="3" /><path d="M1 14.500H15" stroke="#ffff00" strokeWidth="2" />
                <path d="M5 8L11 1L15 4.500L9 11H5ZM5 8L9 11M5 10L2 11.500" />
              </Icon>
            </FontButton>
            <Caret />
          </FontTools>
        </Column>
        <Divider $left={6} $right={5} $color="#fff" />
        <BigButton><AlignIcon /><Label>对齐方式<Caret /></Label></BigButton>
        <Divider $left={1} $right={0} $color="#fff" />
        <BigButton><DirectionIcon /><Label>文字方向<Caret /></Label></BigButton>
        <Corner />
      </Group>
      <Group $grow $right={0}>
        <Column>
          <RowButton><CalcIcon /><Label>快速计算<Caret /></Label></RowButton>
          <RowButton>
            <Icon><path d="M0 15C3 15 3 13 4 8S5.500 1.500 8 1.500M2 6.500H7M8.500 6.500L14 13.500M15 6.500L8 13.500" /></Icon>
            公式
          </RowButton>
        </Column>
        <Column>
          <RowButton><RepeatIcon />标题行重复</RowButton>
          <RowButton><ConvertIcon />转换成文本</RowButton>
        </Column>
      </Group>
      <RibbonScroll aria-label="向右滚动">
        <Icon w={5} h={8} strokeWidth="1.500"><path d="M.5 .5L4 4L.5 7.500" /></Icon>
      </RibbonScroll>
    </Ribbon>
  )
}

function Document() {
  return (
    <Canvas>
      <Page>
        <CropRow><Crop $sides="0 1px 1px 0" /><Crop $sides="0 0 1px 1px" /></CropRow>
        <Paragraph><Mark /></Paragraph>
        <Form>
          <colgroup>{widths.map((w, i) => <col key={i} width={w} />)}</colgroup>
          <tbody>
            <tr height="55">
              <td>姓名<Mark /><SecondLine><Mark /></SecondLine></td>
              <td><Mark /></td>
              <td>性别<Mark /></td>
              <td><Mark /></td>
              <td>身高<Mark /></td>
              <td><Mark /></td>
              <td colSpan="2" rowSpan="3"><Mark /></td>
            </tr>
            {rows.map((row, i) => (
              <tr key={i} height={row.h}>
                {row.cells.map((text, c) => (
                  <td key={c} colSpan={row.full && c === 5 ? 2 : 1}>{text}<Mark /></td>
                ))}
              </tr>
            ))}
          </tbody>
        </Form>
        <Paragraph $start><Mark /></Paragraph>
        <CropRow $end><Crop $sides="1px 1px 0 0" /><Crop $sides="1px 0 0 1px" /></CropRow>
        <Handle $x={-11} $y={77} $w={14} $h={14} aria-label="移动表格">
          <Icon w={10} h={10}><path d="M5 0V10M0 5H10M3.500 1.500L5 0L6.500 1.500M3.500 8.500L5 10L6.500 8.500M1.500 3.500L0 5L1.500 6.500M8.500 3.500L10 5L8.500 6.500" /></Icon>
        </Handle>
        <Handle $x={522} $y={235} $w={12} $h={24} aria-label="添加列">
          <Icon w={7} h={7}><path d="M3.500 0V7M0 3.500H7" /></Icon>
        </Handle>
        <Handle $x={249} $y={405} $w={24} $h={13} aria-label="添加行">
          <Icon w={7} h={7}><path d="M3.500 0V7M0 3.500H7" /></Icon>
        </Handle>
        <Handle $x={521} $y={404} $w={13} $h={14} aria-label="缩放表格">
          <Icon w={9} h={9}><path d="M1 3.500V1H3.500M1 1L4 4M8 5.500V8H5.500M8 8L6 6" /></Icon>
        </Handle>
        <Overlay width="524" height="420" viewBox="0 0 524 420">
          <path d="M521.500 96V99M521.500 151V154M521.500 193V196M521.500 237V240M521.500 279V282M521.500 322V325M521.500 365V368" stroke="#777" />
          <path d="M27 95V113" stroke="#000" strokeWidth="2" />
          <path d="M27 112L45 115L40 117L78 148L119 188L171 236L170 237L115 192L78 162L36 124L33 129Z" fill="#ff2313" />
        </Overlay>
      </Page>
    </Canvas>
  )
}

function Scroller() {
  return (
    <ScrollBar>
      <ScrollButton $h={12} aria-label="标尺"><Icon w={9} h={9}><path d="M1 1H8L4.500 4Z" fill="currentColor" stroke="none" /><path d="M.5 5.500H3.500V8.500H.5ZM5.500 5.500H8.500V8.500H5.500Z" /></Icon></ScrollButton>
      <ScrollButton $h={22} aria-label="向上"><Icon w={6} h={4}><path d="M0 4H6L3 0Z" fill="currentColor" stroke="none" /></Icon></ScrollButton>
      <Thumb />
      <ScrollButton $h={23} aria-label="向下"><Icon w={6} h={4}><path d="M0 0H6L3 4Z" fill="currentColor" stroke="none" /></Icon></ScrollButton>
      <ScrollButton $h={14} aria-label="上一页"><Icon w={6} h={8}><path d="M0 3.500H6L3 0ZM0 8H6L3 4.500Z" fill="currentColor" stroke="none" /></Icon></ScrollButton>
      <ScrollButton $h={22} aria-label="选择浏览对象"><Icon w={6} h={6}><rect x=".5" y=".5" width="5" height="5" /></Icon></ScrollButton>
      <ScrollButton $h={14} aria-label="下一页"><Icon w={6} h={8}><path d="M0 0H6L3 3.500ZM0 4.500H6L3 8Z" fill="currentColor" stroke="none" /></Icon></ScrollButton>
    </ScrollBar>
  )
}

function StylesPanel() {
  const [selected, setSelected] = useState("正文")
  const [preview, setPreview] = useState(true)

  return (
    <Panel>
      <PanelHead>
        <button>样式和格式<Caret /></button>
        <button aria-label="固定"><Icon w={13} h={13}><path d="M3.500 .5H9.500V6L12.500 9.500H.5L3.500 6ZM6.500 9.500V13" /></Icon></button>
        <button aria-label="关闭"><Icon w={11} h={11}><path d="M.5 .5L10.500 10.500M10.500 .5L.5 10.500" /></Icon></button>
      </PanelHead>
      <SelectBox $height={32} $large>
        <select aria-label="当前样式"><option>正文</option></select>
        <Icon w={8} h={5}><path d="M0 0H8L4 4.500Z" fill="#63718d" stroke="none" /></Icon>
      </SelectBox>
      <ButtonRow>
        <button>新样式...</button>
        <button>清除格式</button>
      </ButtonRow>
      <Prompt>请选择要应用的格式</Prompt>
      <StyleList>
        {styleNames.map(s => (
          <StyleItem key={s.name} $size={s.size} $bold={s.bold} $on={s.name === selected}
            onClick={() => setSelected(s.name)}>
            {s.name}
            {s.char ? <CharMark>a</CharMark> : <StyleMark />}
          </StyleItem>
        ))}
      </StyleList>
      <ShowRow>
        <label htmlFor="show">显示:</label>
        <SelectBox $grow $height={23}>
          <select id="show"><option>有效样式</option></select><Caret />
        </SelectBox>
      </ShowRow>
      <PreviewRow>
        <label>
          <CheckBox type="checkbox" checked={preview} onChange={e => setPreview(e.target.checked)} />
          显示预览
        </label>
        <a href="#layout">
          <svg width="12" height="10" viewBox="0 0 12 10"><path d="M0 2.500L3 4L6 0L9 4L12 2.500L11 9.500H1Z" fill="#ff9a0a" /></svg>
          智能排版
        </a>
      </PreviewRow>
    </Panel>
  )
}

function Status() {
  const [zoom, setZoom] = useState(28)
  return (
    <StatusBar>
      <span>页面: 1/1</span>
      <Divider $height={14} $left={6} $right={10} />
      <span>字数: 36</span>
      <Divider $height={14} $left={5} />
      <SpellCheck>
        <Icon><path d="M5.500 1.500H.5V14.500H15.500V1.500H10.500L8 3.500ZM5 7.500L7.500 10L11.500 6" /></Icon>
        拼写检查
      </SpellCheck>
      <Caret />
      <Divider $height={14} $left={2} />
      <ProofButton>
        <Icon w={14}><path d="M4.500 1.500H.5V14.500H13.500V1.500H9.500L7 3.500ZM4.500 6L9.500 11M9.500 6L4.500 11" /></Icon>
        文档校对
      </ProofButton>
      <Divider $height={14} />
      <ViewTools>
        <ViewButton aria-label="护眼模式">
          <Icon><path d="M.5 9.500C4 4 12 4 15.500 9.500C12 15 4 15 .5 9.500ZM8 1V3M2.500 2L4 4M13.500 2L12 4" /><circle cx="8" cy="9.500" r="3.500" /><circle cx="8" cy="9.500" r="1.500" /></Icon>
        </ViewButton>
        <Divider $height={14} $left={8} $right={11} />
        <ViewButton $on $width={23} aria-label="页面视图">
          <Icon w={14} h={14}><path d="M.5 .5H10L13.500 4V13.500H.5ZM3 6.500H11M3 9.500H11" /></Icon>
        </ViewButton>
        <ViewButton $width={28} aria-label="大纲">
          <Icon w={14} h={14}><path d="M0 1.500H2M4 1.500H14M3 5.500H5M7 5.500H14M3 9.500H5M7 9.500H14M0 13H2M4 13H14" /></Icon>
        </ViewButton>
        <ViewButton $width={25} aria-label="阅读版式">
          <Icon><path d="M.5 1.500H5.500L8 3.500L10.500 1.500H15.500V13H10.500L8 15L5.500 13H.5ZM8 3.500V15" /></Icon>
        </ViewButton>
        <ViewButton aria-label="Web版式">
          <Icon><circle cx="8" cy="8" r="7" /><ellipse cx="8" cy="8" rx="3.500" ry="7" /><path d="M1.500 5.500H14.500M1.500 10.500H14.500M8 1V15" /></Icon>
        </ViewButton>
        <ViewButton $width={28} aria-label="写作模式">
          <Icon><path d="M4 8.500L11.500 1.500C13 .5 15 2.500 14 4L7 11.500M.8 14.500C1 12 2 9 4 8.500L7 11.500C6 13.500 3.500 14.500 .8 14.500ZM8 15.500H15.500M6 10L13 3" /></Icon>
        </ViewButton>
        <Divider $height={14} $left={8} $right={9} />
        <ViewButton aria-label="适合页面">
          <Icon w={14} h={14}><path d="M.5 4V.5H4M10 .5H13.500V4M13.500 10V13.500H10M4 13.500H.5V10M4.500 4.500H9.500V9.500H4.500Z" /></Icon>
        </ViewButton>
        <button>&nbsp;66%&nbsp;<Caret /></button>
        <ViewButton $width={26} aria-label="缩小"><Icon w={10} h={4}><path d="M0 2H10" strokeWidth="2" /></Icon></ViewButton>
        <Zoom type="range" aria-label="显示比例" value={zoom} onChange={e => setZoom(e.target.value)} />
        <button aria-label="放大"><Icon w={12} h={12}><path d="M0 6H12M6 1V11" strokeWidth="2" /></Icon></button>
        <ViewButton $width={38} aria-label="全屏">
          <Icon w={14} h={14}><path d="M.5 4.500V.5H4.500M.5 .5L5 5M9.500 .5H13.500V4.500M13.500 .5L9 5M13.500 9.500V13.500H9.500M13.500 13.500L9 9M4.500 13.500H.5V9.500M.5 13.500L5 9" /></Icon>
        </ViewButton>
      </ViewTools>
    </StatusBar>
  )
}

function App() {
  return (
    <Shell>
      <GlobalStyle />
      <Titles />
      <Menu />
      <Tools />
      <Workspace>
        <Document />
        <Scroller />
        <StylesPanel />
        <SideBar>
          <SideGrip />
          {sideIcons.map((icon, i) => (
            <SideButton key={i} $on={i === 1} aria-label={"工具" + (i + 1)}><Icon>{icon}</Icon></SideButton>
          ))}
        </SideBar>
      </Workspace>
      <Status />
      <Bubble width="32" height="38" viewBox="0 0 32 38">
        <path d="M40 1H17C6 1 .8 9 .8 16C.8 27 8 37 19 37H40Z" fill="#fde3da" stroke="#5e2020" />
        <path d="M40 5H19C10 5 5 10 5 17C5 26 11 32 19 32H40Z" fill="#fff" />
        <circle cx="25" cy="18.500" r="8.500" fill="#fff" stroke="#5e2020" />
        <path d="M30 14A6 6 0 1 0 30 23" fill="none" stroke="#f3a9a5" strokeWidth="3" />
        <path d="M32 16H27A2.500 2.500 0 0 0 27 21H32" fill="#fff" stroke="#5e2020" />
      </Bubble>
      <NetBall>
        <Icon w={26} h={42}>
          <path d="M14 15V9M11.500 11L14 8.500L16.500 11" stroke="#3fb3f2" strokeWidth="1.500" />
          <path d="M14 28V34M11.500 32L14 34.500L16.500 32" stroke="#35b04a" strokeWidth="1.500" />
          <circle cx="27" cy="32" r="3" stroke="#fff" strokeWidth="1.500" />
        </Icon>
      </NetBall>
      <Activate><strong>激活 Windows</strong>转到“设置”以激活 Windows</Activate>
      <Brand>
        <svg width="44" height="40" viewBox="0 0 44 40">
          <defs>
            <linearGradient id="aurora" x1="0" y1="1" x2="1" y2="0">
              <stop offset="0" stopColor="#3f7cc9" />
              <stop offset="1" stopColor="#5cc8f0" />
            </linearGradient>
            <linearGradient id="leaf" x1="0" y1="1" x2="1" y2="0">
              <stop offset="0" stopColor="#e4e85a" />
              <stop offset="1" stopColor="#43b97a" />
            </linearGradient>
          </defs>
          <path d="M42 1C24 0 6 9 2 22C0 31 9 35 17 31C9 32 5 27 9 20C14 11 27 5 42 1Z" fill="url(#aurora)" />
          <path d="M28 15C19 14 11 20 12 25C14 30 23 28 25 23C21 26 16 26 17 23C18 19 23 17 28 15Z" fill="url(#aurora)" />
          <path d="M6 37C22 38 34 31 35 22C36 17 31 14 27 16C37 11 43 16 41 23C38 34 22 43 6 37Z" fill="url(#leaf)" />
        </svg>
        <div>极光下载站<small>www.xz7.com</small></div>
      </Brand>
    </Shell>
  )
}

export default App;
